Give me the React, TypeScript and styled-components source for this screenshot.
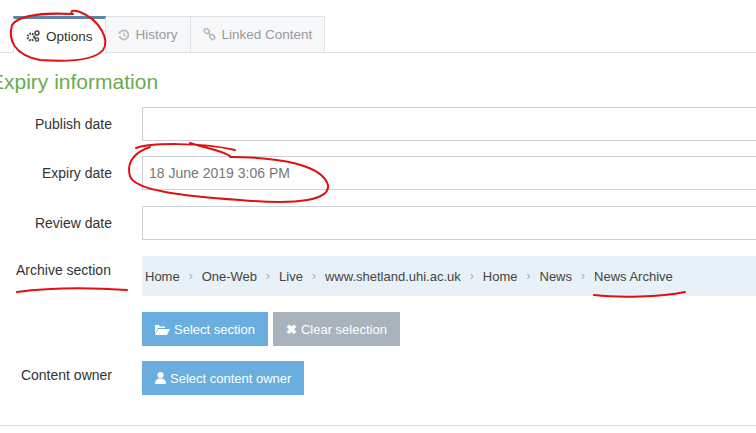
import React from "react";
import styled, { createGlobalStyle } from "styled-components";

const G = createGlobalStyle`
  body{margin:0;background:#fff;font-family:"Liberation Sans",Arial,sans-serif;overflow:hidden;}
`;
const Page = styled.div`position:relative;width:756px;height:433px;overflow:hidden;`;
const Tabs = styled.div`display:flex;padding:16px 0 0 13px;border-bottom:1px solid #dde2e6;height:36px;box-sizing:content-box;`;
const Tab = styled.div<{ active?: boolean }>`
  display:flex;align-items:center;gap:6px;padding:0 12px;box-sizing:border-box;
  font-size:13.5px;color:${p => (p.active ? "#333" : "#999")};
  background:${p => (p.active ? "#fff" : "#f7f8f9")};
  border:1px solid #dde2e6;border-bottom:none;margin-bottom:${p => (p.active ? "-1px" : "0")};
  border-top:${p => (p.active ? "3px solid #5b86a8" : "1px solid #dde2e6")};
  height:${p => (p.active ? "37px" : "36px")};
  & + &{border-left:none;}
`;
const Title = styled.h2`margin:15px 0 0 -10px;font-weight:normal;font-size:21px;color:#6aab4f;height:28px;line-height:28px;`;
const Form = styled.div`display:flex;flex-direction:column;margin-top:11px;`;
const Row = styled.div<{ mt?: number }>`display:flex;align-items:center;margin-top:${p => p.mt ?? 0}px;`;
const Label = styled.div<{ left?: boolean; up?: number }>`width:112px;box-sizing:border-box;flex:none;font-size:14px;color:#333;
  text-align:${p => (p.left ? "left" : "right")};padding-left:${p => (p.left ? 16 : 0)}px;margin-top:${p => -(p.up ?? 0)}px;`;
const Field = styled.div`margin-left:30px;flex:1;height:34px;border:1px solid #ccd1d5;border-right:none;box-sizing:border-box;display:flex;align-items:center;padding-left:6px;font-size:14px;color:#777;`;
const Crumbs = styled.div`margin-left:30px;flex:1;height:40px;background:#e8f1f7;display:flex;align-items:center;padding-left:3px;font-size:13px;color:#444;gap:9px;`;
const Sep = styled.span`color:#aaa;font-size:12px;`;
const Btns = styled.div`margin-left:142px;display:flex;gap:5px;`;
const Btn = styled.div<{ gray?: boolean; ml?: number }>`height:34px;padding:0 13px;display:flex;align-items:center;gap:4px;color:#fff;font-size:13px;margin-left:${p => p.ml ?? 0}px;background:${p => (p.gray ? "#a9b3bb" : "#6aaee0")};`;
const Bottom = styled.div`position:absolute;left:0;right:0;top:425px;border-top:1px solid #ddd;`;
const Ink = styled.svg`position:absolute;left:0;top:0;pointer-events:none;`;

export default function App() {
  const crumbs = ["Home", "One-Web", "Live", "www.shetland.uhi.ac.uk", "Home", "News", "News Archive"];
  return (
    <Page>
      <G />
      <Tabs>
        <Tab active>
          <svg width="14" height="12" viewBox="0 0 14 12"><circle cx="5" cy="7" r="3.3" fill="none" stroke="#444" strokeWidth="2.2" strokeDasharray="1.6 1.1"/><circle cx="11" cy="3" r="2" fill="none" stroke="#444" strokeWidth="1.4"/><circle cx="11" cy="9.5" r="1.6" fill="none" stroke="#444" strokeWidth="1.3"/></svg>
          Options
        </Tab>
        <Tab>
          <svg width="12" height="12" viewBox="0 0 12 12"><path d="M2.5 3A4.5 4.5 0 1 1 1.5 7" fill="none" stroke="#bbb" strokeWidth="1.8"/><path d="M0.5 1.5L3.5 4.5 0.5 5Z" fill="#bbb"/><path d="M6 3.5V6.2L7.8 7.5" stroke="#bbb" strokeWidth="1.3" fill="none"/></svg>
          History
        </Tab>
        <Tab>
          <svg width="13" height="13" viewBox="0 0 13 13"><rect x="1" y="1" width="5.5" height="4" rx="2" transform="rotate(45 3.7 3)" fill="none" stroke="#bbb" strokeWidth="1.6"/><rect x="6.5" y="7" width="5.5" height="4" rx="2" transform="rotate(45 9.2 9)" fill="none" stroke="#bbb" strokeWidth="1.6"/><path d="M5 5L8 8" stroke="#bbb" strokeWidth="1.6"/></svg>
          Linked Content
        </Tab>
      </Tabs>
      <Title>Expiry information</Title>
      <Form>
        <Row><Label>Publish date</Label><Field /></Row>
        <Row mt={15}><Label>Expiry date</Label><Field>18 June 2019 3:06 PM</Field></Row>
        <Row mt={16}><Label>Review date</Label><Field /></Row>
        <Row mt={16}><Label left up={12}>Archive section</Label>
          <Crumbs>{crumbs.map((c, i) => <React.Fragment key={i}>{i > 0 && <Sep>›</Sep>}<span>{c}</span></React.Fragment>)}</Crumbs>
        </Row>
        <Row mt={16}><Btns>
          <Btn><svg width="15" height="11" viewBox="0 0 15 11"><path d="M0 1h4l1 1.5h5V4H3L0 10Z" fill="#fff"/><path d="M3.3 5H15L12 11H0Z" fill="#fff"/></svg>Select section</Btn>
          <Btn gray><span style={{ fontWeight: "bold" }}>✖</span>Clear selection</Btn>
        </Btns></Row>
        <Row mt={15}><Label up={6}>Content owner</Label>
          <Btn ml={30}><svg width="11" height="12" viewBox="0 0 11 12"><circle cx="5.5" cy="3" r="3" fill="#fff"/><path d="M0 12C0 8 2 6.5 5.5 6.5S11 8 11 12Z" fill="#fff"/></svg>Select content owner</Btn>
        </Row>
      </Form>
      <Bottom />
      <Ink width="756" height="433">
        <g fill="none" stroke="#e01010" strokeWidth="2" strokeLinecap="round">
          <path d="M73 14C50 13 20 13 12 25 8 40 14 55 40 60 70 62 95 60 103 50 110 40 100 20 80 12 74 10 70 10 72 14"/>
          <path d="M136 148C150 143 200 142 235 150M190 143C205 148 220 150 230 156"/>
          <path d="M150 147C135 152 126 162 130 176 134 190 180 196 240 200 300 205 330 200 328 185 322 165 280 157 230 157"/>
          <path d="M17 292C40 289 80 287 127 290"/>
          <path d="M594 295C620 298 660 297 685 292"/>
        </g>
      </Ink>
    </Page>
  );
}
